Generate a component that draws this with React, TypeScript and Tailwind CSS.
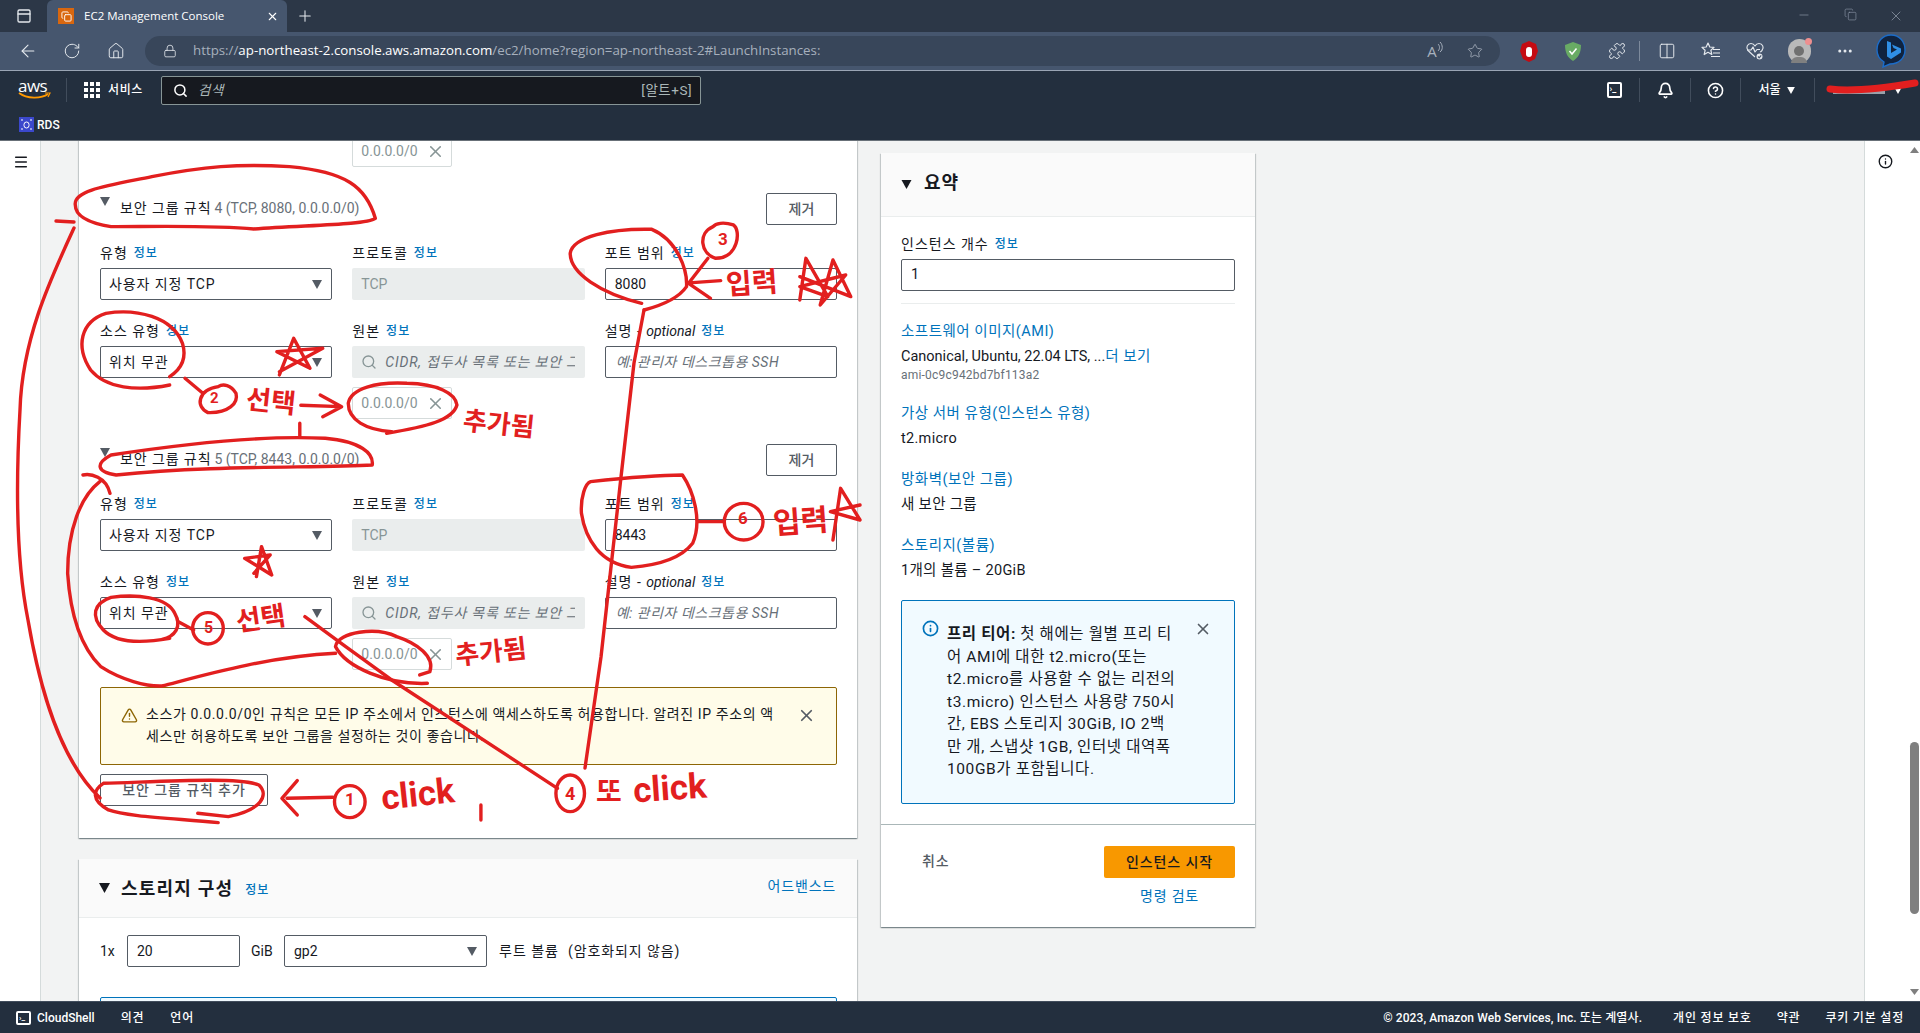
import React from 'react';
import { ArrowLeft, RotateCw, Home, Lock, Star, Puzzle, Columns2, Minus, X, Plus, Search, Bell, CircleHelp, Info, TriangleAlert, Menu, MoreHorizontal, Copy, PanelTop } from 'lucide-react';

const Tri = ({ c = '#545b64', w = 10, h = 9 }: { c?: string; w?: number; h?: number }) => (
  <svg width={w} height={h} viewBox="0 0 10 9" className="shrink-0"><polygon points="0,0 10,0 5,9" fill={c} /></svg>
);

const Lbl = ({ t, it }: { t: string; it?: boolean }) => (
  <div className="h-[20px] pt-[2px] mb-[6px] flex items-center gap-[6px] text-[14px] leading-[20px] text-[#16191f] tracking-[1px]">
    {it ? (<span>{t} - <i className="tracking-normal">optional</i></span>) : <span>{t}</span>}
    <span className="text-[12px] text-[#0073bb] font-medium tracking-[1px]">정보</span>
  </div>
);

const Sel = ({ v }: { v: string }) => (
  <div className="h-[32px] border border-[#545b64] rounded-[2px] bg-white pl-[8px] pr-[9px] flex items-center justify-between text-[14px] text-[#16191f] tracking-[0.9px]">
    <span>{v}</span>
    <Tri />
  </div>
);

const Chip = () => (
  <div className="h-[32px] w-[100px] border border-[#d5dbdb] rounded-[2px] bg-white pl-[8px] pr-[6px] flex items-center justify-between text-[14px] text-[#879596]">
    <span>0.0.0.0/0</span>
    <X size={19} strokeWidth={2} className="text-[#879596]" />
  </div>
);

const Rule = ({ n, sum, port }: { n: number; sum: string; port: string }) => (
  <div>
    <div className="flex items-center justify-between h-[32px]">
      <div className="flex items-center text-[14px] text-[#16191f] relative -mt-[2px]">
        <span className="w-[20px] -mt-[14px]"><Tri /></span>
        <span className="tracking-[0.9px]">보안 그룹 규칙</span>
        <span className="ml-[3px] text-[#687078]">{n} {sum}</span>
      </div>
      <div className="w-[71px] h-[32px] border border-[#545b64] rounded-[2px] flex items-center justify-center text-[14px] font-medium text-[#545b64] -ml-[1px]">제거</div>
    </div>
    <div className="grid grid-cols-3 gap-x-[20px] mt-[17px]">
      <div><Lbl t="유형" /><Sel v="사용자 지정 TCP" /></div>
      <div><Lbl t="프로토콜" /><div className="h-[32px] bg-[#eaeded] rounded-[2px] px-[9px] flex items-center text-[14px] text-[#879596]">TCP</div></div>
      <div><Lbl t="포트 범위" /><div className="h-[32px] border border-[#545b64] rounded-[2px] px-[9px] flex items-center text-[14px] text-[#16191f]">{port}</div></div>
    </div>
    <div className="grid grid-cols-3 gap-x-[20px] mt-[20px]">
      <div><Lbl t="소스 유형" /><Sel v="위치 무관" /></div>
      <div>
        <Lbl t="원본" />
        <div className="h-[32px] bg-[#eaeded] rounded-[2px] pl-[9px] flex items-center gap-[8px] text-[14px] italic text-[#687078] overflow-hidden whitespace-nowrap tracking-[0.8px]">
          <Search size={16} className="text-[#879596] shrink-0" />
          <span className="overflow-hidden w-[190px]">CIDR, 접두사 목록 또는 보안 그룹</span>
        </div>
        <div className="mt-[9px]"><Chip /></div>
      </div>
      <div>
        <Lbl t="설명" it />
        <div className="h-[32px] border border-[#545b64] rounded-[2px] px-[10px] flex items-center text-[14px] italic text-[#687078] tracking-[0.5px]">예: 관리자 데스크톱용 SSH</div>
      </div>
    </div>
  </div>
);

const SumItem = ({ a, b, top }: { a: string; b: string; top: string }) => (
  <div className={top}>
    <div className="h-[20px] leading-[20px] text-[14.5px] text-[#0073bb] tracking-[0.5px]">{a}</div>
    <div className="h-[20px] leading-[20px] text-[14.5px] text-[#16191f] mt-[5px] tracking-[0.3px]">{b}</div>
  </div>
);

const TB = ({ children }: { children: React.ReactNode }) => (
  <div className="w-[44px] h-[38px] flex items-center justify-center text-[#e5e9ee]">{children}</div>
);

const NavDiv = () => <div className="w-px h-[24px] bg-[#414d5c]" />;

const Ann = ({ t, cls }: { t: string; cls: string }) => (
  <span className={`absolute font-bold leading-none whitespace-nowrap text-[#e21f1f] ${cls}`}>{t}</span>
);

const Overlay = () => (
  <div className="absolute inset-0 pointer-events-none">
    <svg width="1920" height="1033" viewBox="0 0 1920 1033" className="absolute inset-0" fill="none" stroke="#e21f1f" strokeWidth="3.4" strokeLinecap="round" strokeLinejoin="round">
      <path d="M1830 89 C1855 92 1885 88 1915 83" strokeWidth="7" />
      <path d="M56 221 L74 222 M74 228 C50 280 22 340 20 410 C16 480 16 560 28 620 C40 690 60 760 100 798" />
      <path d="M644 310 L634 363 L621 477 L601 657 L585 768" />
      <g transform="translate(60 130) scale(0.5102 0.3333)">
        <path vectorEffect="non-scaling-stroke" d="M30 225 C25 180 100 165 180 140 C280 110 350 100 450 110 C560 125 600 170 618 265 C600 285 480 285 380 297 C300 285 180 290 100 290 C60 280 30 260 30 225" />
        <path vectorEffect="non-scaling-stroke" d="M1140 520 C1060 490 1000 430 1000 370 C1005 320 1080 295 1160 298 C1210 330 1230 420 1228 470 C1210 510 1170 530 1145 540" />
        <path vectorEffect="non-scaling-stroke" d="M1280 290 C1250 310 1255 370 1285 385 C1330 385 1335 300 1320 285 C1300 275 1285 280 1280 290" />
        <path vectorEffect="non-scaling-stroke" d="M1270 385 L1232 460 L1275 505 M1295 452 L1240 458" />
        <path vectorEffect="non-scaling-stroke" d="M1450 510 L1462 385 L1505 500 L1450 470 L1540 435 L1490 525 L1515 390 L1550 500 L1450 440" />
        <path vectorEffect="non-scaling-stroke" d="M430 735 L458 625 L490 715 L425 665 L515 655 L430 725" />
        <path vectorEffect="non-scaling-stroke" d="M215 765 C150 785 90 775 60 720 C30 650 40 575 90 550 C150 535 220 560 240 640 C250 690 235 720 215 740" />
        <path vectorEffect="non-scaling-stroke" d="M245 745 L280 790 M310 770 C270 780 265 830 290 848 C330 850 350 820 345 790 C335 765 320 760 310 770" />
        <path vectorEffect="non-scaling-stroke" d="M472 826 L550 830 M510 795 L552 830 L515 860 M470 880 L470 920" />
        <path vectorEffect="non-scaling-stroke" d="M650 905 C600 900 565 870 565 820 C570 775 620 755 680 760 C740 762 775 790 778 825 C770 870 720 890 640 910" />
        <path vectorEffect="non-scaling-stroke" d="M110 1035 C70 1025 70 1000 100 975 C250 940 400 915 520 925 C590 935 615 970 612 1005 C500 1015 300 1005 110 1035" />
      </g>
      <g transform="translate(60 440) scale(0.5102 0.3333)">
        <path vectorEffect="non-scaling-stroke" d="M45 105 C60 100 90 110 98 160 M78 125 C40 170 15 270 15 400 C20 520 40 620 80 680 C120 720 170 740 200 738 C260 715 400 650 540 640" />
        <path vectorEffect="non-scaling-stroke" d="M720 730 C640 735 560 680 540 620 C545 575 620 560 660 590 C700 610 735 650 725 695 L705 705" />
        <path vectorEffect="non-scaling-stroke" d="M480 530 L560 620 L650 720 L975 1045" />
        <path vectorEffect="non-scaling-stroke" d="M1040 125 C1100 115 1180 105 1220 105 C1240 150 1260 240 1240 310 C1220 350 1180 375 1120 382 C1060 370 1030 300 1022 220 C1020 170 1030 130 1040 125" />
        <path vectorEffect="non-scaling-stroke" d="M1250 245 L1300 245" />
        <ellipse vectorEffect="non-scaling-stroke" cx="1340" cy="245" rx="38" ry="55" />
        <path vectorEffect="non-scaling-stroke" d="M1515 300 L1530 145 L1568 240 L1510 215 L1568 195" />
        <path vectorEffect="non-scaling-stroke" d="M385 410 L395 320 L415 405 L362 355 L412 345 L380 400" />
        <path vectorEffect="non-scaling-stroke" d="M215 595 C160 610 110 610 85 570 C60 530 65 490 100 472 C150 462 210 470 225 520 C240 560 225 590 200 598" />
        <ellipse vectorEffect="non-scaling-stroke" cx="290" cy="565" rx="30" ry="47" />
        <path vectorEffect="non-scaling-stroke" d="M232 545 L262 570" />
        <path vectorEffect="non-scaling-stroke" d="M310 1148 C220 1135 130 1130 95 1110 C60 1080 65 1050 85 1030 C200 1025 350 1010 390 1035 C410 1065 395 1110 330 1130 L270 1120" />
        <path vectorEffect="non-scaling-stroke" d="M535 1072 L445 1075 M465 1022 L435 1075 L465 1125 M825 1095 L825 1140" />
        <ellipse vectorEffect="non-scaling-stroke" cx="568" cy="1085" rx="30" ry="48" />
        <ellipse vectorEffect="non-scaling-stroke" cx="1000" cy="1060" rx="28" ry="55" />
      </g>
    </svg>
    <Ann t="3" cls="left-[718px] top-[231px] text-[17px]" />
    <Ann t="입력" cls="left-[726px] top-[270px] text-[28px] -rotate-[4deg]" />
    <Ann t="2" cls="left-[210px] top-[391px] text-[15px]" />
    <Ann t="선택" cls="left-[246px] top-[389px] text-[27px] rotate-[6deg]" />
    <Ann t="추가됨" cls="left-[463px] top-[411px] text-[26px] rotate-[6deg]" />
    <Ann t="6" cls="left-[738px] top-[510px] text-[17px]" />
    <Ann t="입력" cls="left-[773px] top-[507px] text-[30px] -rotate-[4deg]" />
    <Ann t="5" cls="left-[204px] top-[620px] text-[16px]" />
    <Ann t="선택" cls="left-[236px] top-[606px] text-[27px] -rotate-[8deg]" />
    <Ann t="추가됨" cls="left-[455px] top-[639px] text-[26px] -rotate-[6deg]" />
    <Ann t="1" cls="left-[345px] top-[791px] text-[17px]" />
    <Ann t="click" cls="left-[381px] top-[777px] text-[35px] -rotate-[6deg]" />
    <Ann t="4" cls="left-[565px] top-[785px] text-[18px]" />
    <Ann t="또" cls="left-[596px] top-[779px] text-[28px]" />
    <Ann t="click" cls="left-[633px] top-[771px] text-[35px] -rotate-[4deg]" />
  </div>
);

export default function App() {
  return (
    <div className="relative w-[1920px] h-[1033px] overflow-hidden flex flex-col bg-white font-['Roboto','Noto_Sans_CJK_KR',sans-serif]">
      {/* tab strip */}
      <div className="h-[32px] bg-[#2c3747] flex items-center shrink-0 font-['Open_Sans','Noto_Sans_CJK_KR',sans-serif]">
        <div className="w-[47px] flex justify-center text-[#e5e9ee]"><PanelTop size={16} /></div>
        <div className="w-[240px] h-[32px] bg-[#46566e] rounded-t-[6px] flex items-center pl-[11px] pr-[8px] text-[11.5px] text-white">
          <div className="w-[16px] h-[16px] bg-[#d9670f] flex items-center justify-center text-white"><Copy size={11} /></div>
          <span className="ml-[10px] flex-1">EC2 Management Console</span>
          <X size={13} />
        </div>
        <div className="w-[36px] flex justify-center text-[#e5e9ee]"><Plus size={18} strokeWidth={1.4} /></div>
        <div className="flex-1" />
        <div className="flex text-[#8a95a5] pr-[1px]">
          <div className="w-[46px] flex justify-center"><Minus size={14} strokeWidth={1.2} /></div>
          <div className="w-[46px] flex justify-center"><Copy size={13} strokeWidth={1.2} /></div>
          <div className="w-[46px] flex justify-center"><X size={16} strokeWidth={1.2} /></div>
        </div>
      </div>
      {/* toolbar */}
      <div className="h-[39px] bg-[#46566e] border-b border-[#9aa5b4] flex items-center shrink-0 pl-[6px] font-['Open_Sans','Noto_Sans_CJK_KR',sans-serif]">
        <TB><ArrowLeft size={20} strokeWidth={1.3} /></TB>
        <TB><RotateCw size={18} strokeWidth={1.3} /></TB>
        <TB><Home size={18} strokeWidth={1.3} /></TB>
        <div className="ml-[7px] w-[1355px] h-[30px] rounded-full bg-[#38465a] flex items-center pl-[18px] text-[13.3px]">
          <Lock size={14} strokeWidth={1.4} className="text-[#e5e9ee]" />
          <span className="ml-[16px] text-[#a7b0bd] whitespace-nowrap">https://<span className="text-white">ap-northeast-2.console.aws.amazon.com</span>/ec2/home?region=ap-northeast-2#LaunchInstances:</span>
          <div className="flex-1" />
          <div className="w-[41px] flex justify-center items-center text-[#a7b0bd] text-[15px] pl-[3px]">A<svg width="6" height="12" viewBox="0 0 6 12" className="-mt-[8px]" fill="none" stroke="#a7b0bd" strokeWidth="1"><path d="M1 3 C3 5 3 8 1 10 M3 1 C6 4 6 9 3 11" /></svg></div>
          <div className="w-[41px] flex justify-center text-[#a7b0bd]"><Star size={16} strokeWidth={1.2} /></div>
          <div className="w-[5px]" />
        </div>
        <div className="ml-[7px] flex items-center">
          <TB><svg width="18" height="21" viewBox="0 0 18 21"><path d="M9 0 L16 3 L18 10 L15 18 L9 21 L3 18 L0 10 L2 3Z" fill="#c40b12" /><rect x="6" y="6" width="6" height="10" rx="3" fill="#fff" /></svg></TB>
          <TB><svg width="16" height="19" viewBox="0 0 16 19"><path d="M0 3 L8 0 L16 3 C16 11 13 16 8 19 C3 16 0 11 0 3Z" fill="#68ab64" /><path d="M4.5 9 L7 12 L11.5 6.5" stroke="#fff" strokeWidth="1.5" fill="none" /></svg></TB>
          <TB><Puzzle size={18} strokeWidth={1.3} /></TB>
          <div className="w-[1px] h-[20px] bg-[#7d8a9c] mr-[5px]" />
          <TB><Columns2 size={18} strokeWidth={1.3} /></TB>
          <TB>
            <svg width="20" height="20" viewBox="0 0 20 20" fill="none" stroke="currentColor" strokeWidth="1.2" strokeLinejoin="round">
              <path d="M7 2 L8.8 6 L13 6.4 L9.9 9.3 L10.8 13.5 L7 11.3 L3.2 13.5 L4.1 9.3 L1 6.4 L5.2 6 Z" />
              <path d="M12 8.5 H19 M12 12 H19 M10 15.5 H19" />
            </svg>
          </TB>
          <TB>
            <svg width="20" height="20" viewBox="0 0 20 20" fill="none" stroke="currentColor" strokeWidth="1.2" strokeLinejoin="round">
              <path d="M10 16 L3 9.5 C0.5 6.5 2.5 2.5 6 2.5 C8 2.5 9.3 3.8 10 5 C10.7 3.8 12 2.5 14 2.5 C17.5 2.5 19.5 6.5 17 9.5 L15 11.5" />
              <path d="M2 9 H6 L8 6 L10 11 L12 8.5 H15" />
              <circle cx="14.5" cy="15.5" r="3.6" fill="#e5e9ee" stroke="#46566e" />
              <path d="M13 15.5 L14.2 16.8 L16.2 14.4" stroke="#46566e" />
            </svg>
          </TB>
          <TB><div className="relative w-[23px] h-[24px] rounded-full bg-[#b9b9b9] flex flex-col items-center justify-end overflow-visible"><div className="w-[10px] h-[10px] rounded-full bg-[#707070] mb-[1px]" /><div className="w-[16px] h-[6px] rounded-t-full bg-[#808080]" /><div className="absolute -top-[1px] -right-[1px] w-[7px] h-[7px] rounded-full bg-[#ee8f8f]" /></div></TB>
          <div className="ml-[2px]"><TB><MoreHorizontal size={18} /></TB></div>
          <div className="ml-[2px]"><TB><svg width="30" height="34" viewBox="0 0 30 34"><path d="M15 1 C24 1 29 8 29 16 C29 24 23 30 14 30 L7 33 L8 28 C3 25 1 21 1 16 C1 8 6 1 15 1Z" fill="#10233f" stroke="#1b6cc9" strokeWidth="1.4" /><path d="M11 7 L15 8.5 V19 L21 15.5 L17.5 14 L16 10.5 L25 14.5 V18.5 L15 25 L11 22.5Z" fill="#2f8fe6" /></svg></TB></div>
        </div>
      </div>
      {/* AWS nav */}
      <div className="h-[38px] bg-[#232f3e] flex items-center shrink-0 text-white">
        <div className="w-[66px] pl-[18px] flex flex-col leading-none">
          <span className="text-[17px] font-medium -mt-[4px] tracking-[-0.5px] font-['Open_Sans',sans-serif]">aws</span>
          <svg width="33" height="8" viewBox="0 0 33 8" className="-mt-[2px]"><path d="M1 1 C9 7 23 7 30 2" stroke="#ff9900" strokeWidth="1.8" fill="none" /><path d="M27 1 L32 1 L30 5" stroke="#ff9900" strokeWidth="1.2" fill="none" /></svg>
        </div>
        <NavDiv />
        <div className="ml-[17px] grid grid-cols-3 gap-[2px] w-[16px]">
          {Array.from({ length: 9 }).map((_, i) => <div key={i} className="w-[4px] h-[4px] bg-white" />)}
        </div>
        <span className="ml-[8px] w-[53px] text-[12px] font-medium tracking-[0.6px]">서비스</span>
        <div className="w-[540px] h-[29px] bg-[#16191f] border border-[#879596] rounded-[2px] flex items-center pl-[11px] pr-[8px] text-[13.5px] tracking-[0.5px]">
          <Search size={15} strokeWidth={2.4} />
          <span className="ml-[10px] italic text-[#aab7b8]">검색</span>
          <span className="ml-auto text-[#aab7b8]">[알트+S]</span>
        </div>
        <div className="flex-1" />
        <div className="flex items-center">
          <div className="w-[50px] flex justify-center"><div className="w-[15px] h-[16px] border-2 border-white rounded-[2px] text-[9px] font-bold leading-[11px] pl-[1px]">›_</div></div>
          <NavDiv />
          <div className="w-[50px] flex justify-center"><Bell size={17} strokeWidth={2.4} /></div>
          <NavDiv />
          <div className="w-[49px] flex justify-center"><CircleHelp size={17} strokeWidth={2.2} /></div>
          <NavDiv />
          <div className="w-[73px] flex items-center justify-center gap-[6px] text-[12px] font-medium pr-[2px]">서울<Tri c="#fff" w={8} h={7} /></div>
          <NavDiv />
          <div className="w-[105px] pl-[18px] pr-[18px] flex items-center justify-between"><div className="w-[52px] h-[4px] bg-[#9aa1aa] mt-[4px]" /><Tri c="#fff" w={8} h={7} /></div>
        </div>
      </div>
      <div className="h-[32px] bg-[#232f3e] border-b border-[#687078] flex items-center shrink-0 pl-[19px] text-white text-[12px] font-medium gap-[3px]">
        <svg width="15" height="15" viewBox="0 0 15 15"><rect width="15" height="15" fill="#3b48cc" /><rect x="5" y="5" width="5" height="6" rx="2.5" fill="none" stroke="#fff" strokeWidth="1" /><path d="M2 3h2M11 3h2M2 12h2M11 12h2" stroke="#fff" strokeWidth="1" /></svg>
        <span>RDS</span>
      </div>
      {/* main */}
      <div className="flex-1 min-h-0 flex overflow-hidden">
        <div className="w-[41px] shrink-0 bg-white border-r border-[#d5dbdb] pl-[14px] pt-[13px] text-[#16191f]"><Menu size={16} strokeWidth={2.2} className="-ml-[1px]" /></div>
        <div className="flex-1 min-w-0 bg-[#f2f3f3] flex overflow-hidden">
          <div className="ml-[38px] w-[778px] shrink-0 -mt-[6px]">
            <div className="bg-white shadow-[0_1px_1px_0_rgba(0,28,36,0.3),1px_1px_1px_0_rgba(0,28,36,0.15),-1px_1px_1px_0_rgba(0,28,36,0.15)] pl-[21px] pr-[20px] pb-[32px]">
              <div className="grid grid-cols-3 gap-x-[20px]"><div className="col-start-2"><Chip /></div></div>
              <div className="mt-[26px]"><Rule n={4} sum="(TCP, 8080, 0.0.0.0/0)" port="8080" /></div>
              <div className="mt-[25px]"><Rule n={5} sum="(TCP, 8443, 0.0.0.0/0)" port="8443" /></div>
              <div className="mt-[17px] h-[78px] bg-[#fffce9] border border-[#8d6605] rounded-[2px] flex pl-[20px] pr-[20px] pt-[15px]">
                <TriangleAlert size={17} strokeWidth={2} className="text-[#8d6605] mt-[4px] shrink-0" />
                <p className="ml-[8px] w-[648px] text-[14px] leading-[22px] text-[#16191f] tracking-[0.6px] whitespace-nowrap">소스가 0.0.0.0/0인 규칙은 모든 IP 주소에서 인스턴스에 액세스하도록 허용합니다. 알려진 IP 주소의 액<br />세스만 허용하도록 보안 그룹을 설정하는 것이 좋습니다.</p>
                <X size={19} strokeWidth={2.2} className="ml-auto mt-[3px] text-[#545b64]" />
              </div>
              <div className="mt-[9px] w-[168px] h-[32px] border border-[#545b64] rounded-[2px] flex items-center justify-center text-[14px] font-medium text-[#545b64] tracking-[0.9px]">보안 그룹 규칙 추가</div>
            </div>
            <div className="mt-[21px] bg-white shadow-[0_1px_1px_0_rgba(0,28,36,0.3),1px_1px_1px_0_rgba(0,28,36,0.15),-1px_1px_1px_0_rgba(0,28,36,0.15)]">
              <div className="h-[59px] bg-[#fafafa] border-b border-[#eaeded] pl-[20px] pr-[21px] flex items-center">
                <Tri c="#16191f" w={11} h={10} />
                <span className="ml-[11px] text-[18px] font-bold text-[#16191f] tracking-[1.2px]">스토리지 구성</span>
                <span className="ml-[12px] text-[12px] text-[#0073bb] font-medium mt-[3px] tracking-[1px]">정보</span>
                <span className="ml-auto text-[14px] text-[#0073bb] -mt-[3px] tracking-[0.8px]">어드밴스드</span>
              </div>
              <div className="pl-[21px] pr-[20px] pt-[17px]">
                <div className="flex items-center text-[14px] text-[#16191f]">
                  <span className="w-[27px]">1x</span>
                  <div className="w-[113px] h-[32px] border border-[#545b64] rounded-[2px] px-[9px] flex items-center">20</div>
                  <span className="ml-[11px] w-[33px]">GiB</span>
                  <div className="w-[203px] h-[32px] border border-[#545b64] rounded-[2px] px-[9px] flex items-center justify-between">gp2<Tri /></div>
                  <span className="ml-[12px] tracking-[1px]">루트 볼륨</span>
                  <span className="ml-[9px] text-[#16191f] tracking-[0.9px]">(암호화되지 않음)</span>
                </div>
                <div className="mt-[30px] h-[60px] bg-[#f1faff] border border-[#0073bb] rounded-[2px]" />
              </div>
            </div>
          </div>
          <div className="ml-[24px] w-[374px] shrink-0 mt-[12px]">
            <div className="bg-white shadow-[0_1px_1px_0_rgba(0,28,36,0.3),1px_1px_1px_0_rgba(0,28,36,0.15),-1px_1px_1px_0_rgba(0,28,36,0.15)]">
              <div className="h-[64px] bg-[#fafafa] border-b border-[#eaeded] pl-[20px] flex items-center">
                <Tri c="#16191f" w={11} h={9} />
                <span className="ml-[12px] text-[18px] font-bold text-[#16191f] -mt-[5px] tracking-[1px]">요약</span>
              </div>
              <div className="px-[20px] pt-[16px] pb-[20px]">
                <Lbl t="인스턴스 개수" />
                <div className="h-[32px] border border-[#545b64] rounded-[2px] px-[9px] flex items-center text-[14.5px] text-[#16191f]">1</div>
                <div className="mt-[12px] border-t border-[#eaeded]" />
                <div className="mt-[18px] h-[20px] leading-[20px] text-[14.5px] text-[#0073bb] tracking-[0.5px]">소프트웨어 이미지(AMI)</div>
                <div className="mt-[5px] h-[20px] leading-[20px] text-[14.5px] text-[#16191f]">Canonical, Ubuntu, 22.04 LTS, ...<span className="text-[#0073bb] tracking-[0.5px]">더 보기</span></div>
                <div className="h-[16px] leading-[16px] text-[12px] text-[#687078] tracking-[0.2px]">ami-0c9c942bd7bf113a2</div>
                <SumItem top="mt-[21px]" a="가상 서버 유형(인스턴스 유형)" b="t2.micro" />
                <SumItem top="mt-[21px]" a="방화벽(보안 그룹)" b="새 보안 그룹" />
                <SumItem top="mt-[21px]" a="스토리지(볼륨)" b="1개의 볼륨 – 20GiB" />
                <div className="mt-[19px] h-[204px] bg-[#f1faff] border border-[#0073bb] rounded-[2px] flex pl-[20px] pt-[19px] pr-[22px]">
                  <Info size={17} strokeWidth={2.4} className="text-[#0073bb] shrink-0" />
                  <p className="ml-[8px] text-[15.5px] leading-[22.5px] text-[#16191f] whitespace-nowrap mt-[3px] tracking-[0.6px]"><b>프리 티어:</b> 첫 해에는 월별 프리 티<br />어 AMI에 대한 t2.micro(또는<br />t2.micro를 사용할 수 없는 리전의<br />t3.micro) 인스턴스 사용량 750시<br />간, EBS 스토리지 30GiB, IO 2백<br />만 개, 스냅샷 1GB, 인터넷 대역폭<br />100GB가 포함됩니다.</p>
                  <X size={18} strokeWidth={2.2} className="ml-auto text-[#545b64] shrink-0" />
                </div>
              </div>
              <div className="border-t border-[#aab7b8] h-[103px] pl-[41px] pr-[20px] pt-[21px] flex justify-between">
                <span className="text-[14px] font-medium text-[#545b64] mt-[5px] tracking-[0.8px]">취소</span>
                <div className="w-[131px] flex flex-col items-center">
                  <div className="w-[131px] h-[32px] bg-[#f89800] rounded-[2px] flex items-center justify-center text-[14px] font-medium text-[#16191f] tracking-[0.9px]">인스턴스 시작</div>
                  <span className="mt-[8px] text-[14px] text-[#0073bb] tracking-[0.8px]">명령 검토</span>
                </div>
              </div>
            </div>
          </div>
        </div>
        <div className="w-[56px] shrink-0 bg-white border-l border-[#d5dbdb] flex justify-between">
          <div className="pl-[13px] pt-[13px] text-[#16191f]"><Info size={15} strokeWidth={2.2} /></div>
          <div className="w-[12px] bg-white flex flex-col items-center py-[6px]">
            <svg width="9" height="6" viewBox="0 0 9 6"><polygon points="0,6 9,6 4.5,0" fill="#7f7f7f" /></svg>
            <div className="mt-[589px] w-[9px] h-[172px] bg-[#7f7f7f] rounded-full" />
            <svg width="9" height="6" viewBox="0 0 9 6" className="mt-auto"><polygon points="0,0 9,0 4.5,6" fill="#7f7f7f" /></svg>
          </div>
        </div>
      </div>
      {/* footer */}
      <div className="h-[32px] bg-[#232f3e] border-t border-[#414d5c] shrink-0 flex items-center text-[12px] font-medium text-white pl-[16px] pr-[16px]">
        <div className="w-[15px] h-[14px] border-2 border-white rounded-[2px] text-[8px] font-bold leading-[10px] pl-[1px]">›_</div>
        <span className="ml-[6px]">CloudShell</span>
        <span className="ml-[26px] tracking-[0.8px]">의견</span>
        <span className="ml-[26px] tracking-[0.8px]">언어</span>
        <span className="ml-auto tracking-[0.1px]">© 2023, Amazon Web Services, Inc. 또는 계열사.</span>
        <span className="ml-[31px] tracking-[0.8px]">개인 정보 보호</span>
        <span className="ml-[25px] tracking-[0.8px]">약관</span>
        <span className="ml-[25px] tracking-[0.8px]">쿠키 기본 설정</span>
      </div>
      <Overlay />
    </div>
  );
}
